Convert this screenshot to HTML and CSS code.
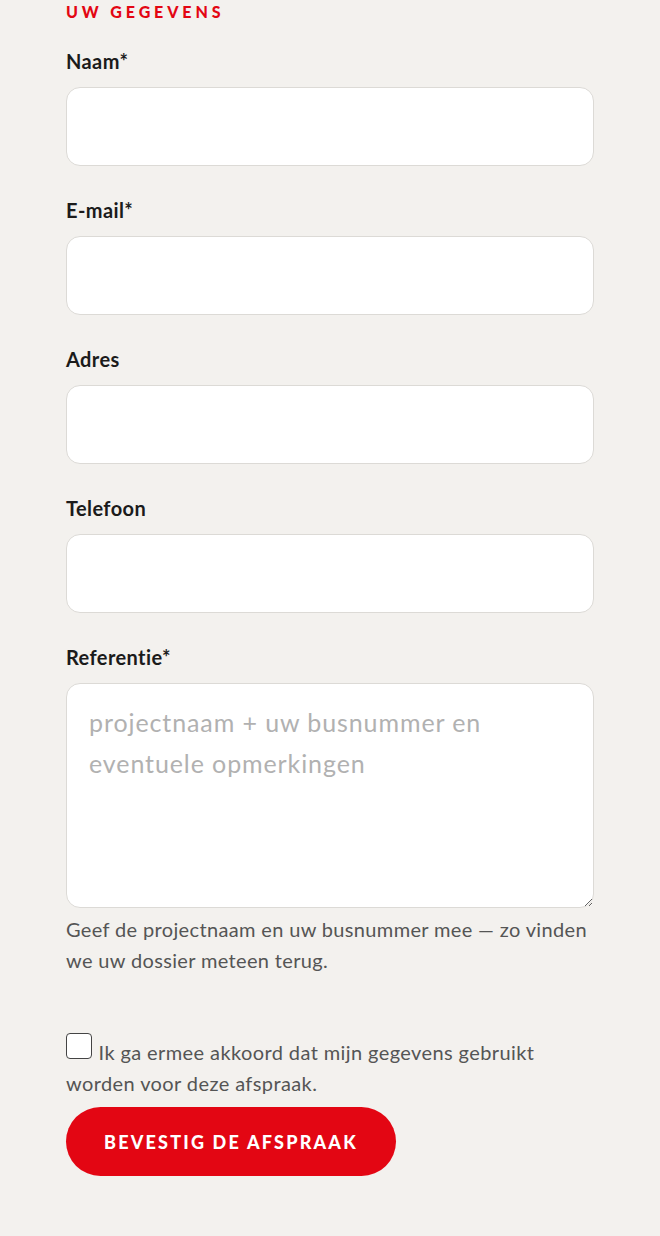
FILE: index.html
```html
<!DOCTYPE html>
<html lang="nl">
<head>
  <meta charset="UTF-8">
  <meta name="viewport" content="width=device-width, initial-scale=1.0">
  <title>Afspraak - Uw gegevens</title>
  <link rel="stylesheet" href="styles.css">
</head>
<body>
  <form class="form" id="afspraakForm">
    <h2 class="section-title">Uw gegevens</h2>

    <div class="form-group">
      <label for="naam">Naam*</label>
      <input type="text" id="naam" required>
    </div>
    <div class="form-group">
      <label for="email">E-mail*</label>
      <input type="email" id="email" required>
    </div>
    <div class="form-group">
      <label for="adres">Adres</label>
      <input type="text" id="adres">
    </div>
    <div class="form-group">
      <label for="telefoon">Telefoon</label>
      <input type="tel" id="telefoon">
    </div>
    <div class="form-group">
      <label for="referentie">Referentie*</label>
      <textarea id="referentie" placeholder="projectnaam + uw busnummer en eventuele opmerkingen" required></textarea>
      <p class="help">Geef de projectnaam en uw busnummer mee — zo vinden we uw dossier meteen terug.</p>
    </div>

    <div class="consent">
      <input type="checkbox" id="akkoord">
      <label for="akkoord">Ik ga ermee akkoord dat mijn gegevens gebruikt worden voor deze afspraak.</label>
    </div>

    <button type="submit" class="submit">Bevestig de afspraak</button>
  </form>
</body>
</html>
```

FILE: styles.css
```css
body {
  margin: 0;
  padding: 0;
  background-color: #f3f1ee;
  font-family: Lato, "Open Sans", Arial, sans-serif;
  color: #1b1b1b;
}
.form {
  padding: 3px 66px 40px;
}
.section-title {
  margin: 0 0 28px;
  color: #e30613;
  font-size: 16px;
  font-weight: 900;
  letter-spacing: 3.9px;
  text-transform: uppercase;
  line-height: 18px;
}
.form-group {
  margin-bottom: 32px;
}
.form-group label {
  display: block;
  font-size: 20px;
  font-weight: 700;
  letter-spacing: 0.4px;
  line-height: 24px;
  margin-bottom: 14px;
}
.form-group input,
.form-group textarea {
  display: block;
  box-sizing: border-box;
  width: 100%;
  height: 79px;
  margin: 0;
  padding: 0 22px;
  border: 1.5px solid #dcdad6;
  border-radius: 14px;
  background: #fff;
  font-family: inherit;
  font-size: 25px;
  letter-spacing: 0.9px;
}
.form-group textarea {
  height: 225px;
  padding: 18px 22px;
  line-height: 41px;
  resize: vertical;
}
.form-group textarea::placeholder {
  color: #b1b1b1;
}
.help {
  margin: 6px 0 0;
  color: #555;
  font-size: 20px;
  letter-spacing: 0.35px;
  line-height: 31px;
}
.consent {
  margin-top: 57px;
  color: #555;
  font-size: 20px;
  letter-spacing: 0.4px;
  line-height: 31px;
}
.consent input {
  width: 26px;
  height: 26px;
  margin: 0 1px 0 0;
  vertical-align: 1px;
  appearance: none;
  border: 1.5px solid #444;
  border-radius: 4px;
  background: #fff;
}
.submit {
  margin-top: 8px;
  padding: 0 38px;
  height: 69px;
  border: none;
  border-radius: 35px;
  background-color: #e30613;
  color: #fff;
  font-family: inherit;
  font-size: 18px;
  font-weight: 900;
  letter-spacing: 2.2px;
  text-transform: uppercase;
  cursor: pointer;
}
```
